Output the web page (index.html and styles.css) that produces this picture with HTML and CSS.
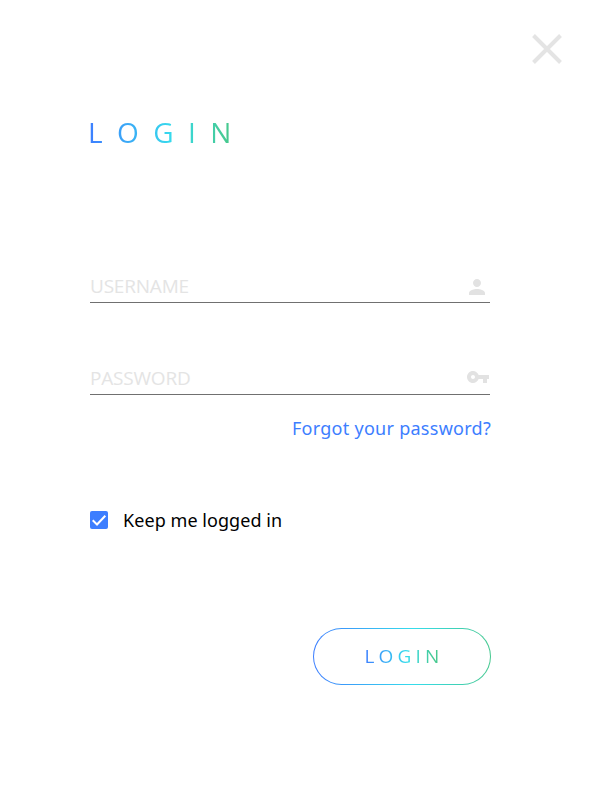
FILE: index.html
```html
<!DOCTYPE html>
<html lang="en">
<head>
<meta charset="utf-8">
<title>Login</title>
<link rel="stylesheet" href="styles.css">
</head>
<body>
<main class="login">
  <button class="close" type="button" aria-label="Close">
    <svg width="32" height="32" viewBox="0 0 32 32"><path d="M2.5 2.5 29.5 29.5M29.5 2.5 2.5 29.5"/></svg>
  </button>
  <h1 class="title"><span class="gradient-text">LOGIN</span></h1>
  <form class="form">
    <div class="field">
      <input class="input" type="text" placeholder="USERNAME" aria-label="Username">
      <svg class="icon icon-user" width="24" height="24" viewBox="0 0 24 24"><path d="M12 12c2.21 0 4-1.79 4-4s-1.79-4-4-4-4 1.79-4 4 1.790 4 4 4zm0 2c-2.670 0-8 1.340-8 4v2h16v-2c0-2.660-5.330-4-8-4z"/></svg>
    </div>
    <div class="field">
      <input class="input" type="password" placeholder="PASSWORD" aria-label="Password">
      <svg class="icon icon-key" width="24" height="24" viewBox="0 0 24 24"><path d="M12.650 10C11.830 7.670 9.610 6 7 6c-3.310 0-6 2.690-6 6s2.690 6 6 6c2.610 0 4.830-1.670 5.650-4H17v4h4v-4h2v-4H12.650zM7 14c-1.100 0-2-.9-2-2s.9-2 2-2 2 .9 2 2-.9 2-2 2z"/></svg>
    </div>
    <a class="forgot" href="#">Forgot your password?</a>
    <label class="keep">
      <svg width="18" height="18" viewBox="0 0 18 18"><rect class="box" width="18" height="18" rx="2"/><path class="tick" d="M2.700 9.300 7 13.500 15.300 4.700"/></svg>
      <span>Keep me logged in</span>
    </label>
    <button class="submit" type="button"><span class="gradient-text">LOGIN</span></button>
  </form>
</main>
</body>
</html>
```
FILE: styles.css
```css
* { box-sizing: border-box; }

body {
  margin: 0;
  background: #fff;
  font-family: "Noto Sans", sans-serif;
  font-size: 18px;
  color: #000;
}

.login {
  display: flex;
  flex-direction: column;
  height: 800px;
  padding: 33px 37px 0 90px;
}

.close {
  align-self: flex-end;
  width: 32px;
  height: 32px;
  padding: 0;
  border: 0;
  background: none;
}

.close svg {
  display: block;
  fill: none;
  stroke: #e4e4e4;
  stroke-width: 4;
}

.title {
  margin: 47px 0 0;
  font: 400 28px/40px "Open Sans", sans-serif;
  letter-spacing: 14.4px;
}

.gradient-text {
  display: inline-block;
  background: linear-gradient(90deg, #3d7eff 0%, #36dcec 54%, #47c990 88%);
  -webkit-background-clip: text;
  background-clip: text;
  color: transparent;
}

.title .gradient-text { margin-left: -2px; }

.form {
  display: flex;
  flex-direction: column;
  width: 401px;
  margin-top: 119px;
}

.field {
  display: flex;
  align-items: center;
  width: 400px;
  height: 32px;
  border-bottom: 1px solid #707070;
}

.field + .field { margin-top: 60px; }

.input {
  flex: 1;
  min-width: 0;
  height: 31px;
  padding: 0;
  border: 0;
  outline: 0;
  background: none;
  font: 400 19px/31px "Open Sans", sans-serif;
  letter-spacing: -0.2px;
}

.input::placeholder { color: #e4e4e4; opacity: 1; }

.icon { fill: #e2e2e2; }
.icon-user { margin-right: 1px; }
.icon-key { margin-bottom: 3px; }

.forgot {
  align-self: flex-end;
  margin-top: 20px;
  line-height: 26px;
  letter-spacing: 0.27px;
  color: #3d7eff;
  text-decoration: none;
}

.keep {
  display: flex;
  align-items: center;
  gap: 15px;
  height: 26px;
  margin-top: 66px;
  letter-spacing: 0.06px;
}

.box { fill: #3d7eff; }
.tick { fill: none; stroke: #fff; stroke-width: 2; }

.submit {
  align-self: flex-end;
  width: 178px;
  height: 57px;
  margin-top: 95px;
  padding: 0 0 2px 4px;
  border: 1px solid transparent;
  border-radius: 29px;
  background:
    linear-gradient(#fff, #fff) padding-box,
    linear-gradient(90deg, #3d7eff 0%, #36dcec 56%, #47c990 100%) border-box;
  font: 400 19px/26px "Open Sans", sans-serif;
  letter-spacing: 4.2px;
}
```
